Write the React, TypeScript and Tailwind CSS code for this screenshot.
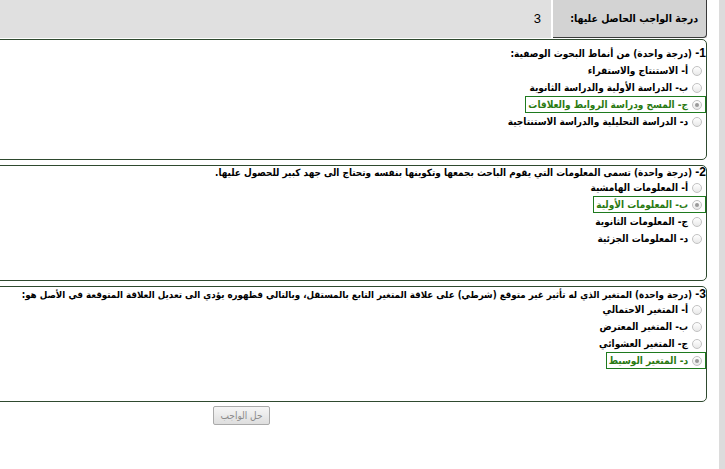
import React from "react";

type Question = {
  n: string;
  text: string;
  options: string[];
  picked: number;
  box: string;
  line: string;
};

const questions: Question[] = [
  {
    n: "1",
    text: "(درجة واحدة) من أنماط البحوث الوصفية:",
    options: [
      "أ- الاستنتاج والاستقراء",
      "ب- الدراسة الأولية والدراسة الثانوية",
      "ج- المسح ودراسة الروابط والعلاقات",
      "د- الدراسة التحليلية والدراسة الاستنتاجية",
    ],
    picked: 2,
    box: "h-[121px] pt-[5px]",
    line: "leading-[16px]",
  },
  {
    n: "2",
    text: "(درجة واحدة) تسمى المعلومات التي يقوم الباحث بجمعها وتكوينها بنفسه وتحتاج الى جهد كبير للحصول عليها.",
    options: ["أ- المعلومات الهامشية", "ب- المعلومات الأولية", "ج- المعلومات الثانوية", "د- المعلومات الجزئية"],
    picked: 1,
    box: "h-[116px] pt-0",
    line: "leading-[12px] text-[9.9px]",
  },
  {
    n: "3",
    text: "(درجة واحدة) المتغير الذي له تأثير غير متوقع (شرطي) على علاقة المتغير التابع بالمستقل، وبالتالي فظهوره يؤدي الى تعديل العلاقة المتوقعة في الأصل هو:",
    options: ["أ- المتغير الاحتمالي", "ب- المتغير المعترض", "ج- المتغير العشوائي", "د- المتغير الوسيط"],
    picked: 3,
    box: "h-[116px] pt-[1px]",
    line: "leading-[12px] text-[9.7px]",
  },
];

function Radio({ on }: { on: boolean }) {
  return (
    <span className="flex h-[10px] w-[10px] shrink-0 items-center justify-center rounded-full border border-[#c2c2c2] bg-gradient-to-b from-white to-[#e8e8e8]">
      {on && <span className="h-[4px] w-[4px] rounded-full bg-[#9a9a9a]" />}
    </span>
  );
}

function QuestionBox({ q }: { q: Question }) {
  return (
    <div className={`-ml-[6px] ${q.box} rounded-[5px] border-[1.5px] border-[#2f4a2f]`} dir="rtl">
      <div className={`whitespace-nowrap text-black ${q.line}`}>
        <span className="font-['Liberation_Sans'] text-[12px]">{q.n}- </span>
        {q.text}
      </div>
      <ul>
        {q.options.map((o, i) => (
          <li key={o} className="flex h-[17px] items-center">
            {i === q.picked ? (
              <span className="flex h-[17px] items-center gap-[4px] border-[1.5px] border-[#1e7a1e] pl-[2px] pr-[3px] text-[#2a7a12]">
                <Radio on />
                {o}
              </span>
            ) : (
              <span className="flex items-center gap-[4px] pr-[4px] text-black">
                <Radio on={false} />
                {o}
              </span>
            )}
          </li>
        ))}
      </ul>
    </div>
  );
}

export default function App() {
  return (
    <div className="flex min-h-screen bg-white font-['DejaVu_Sans_Condensed','DejaVu_Sans',sans-serif] text-[10px] font-bold">
      <div className="w-[707px] shrink-0 overflow-hidden">
        <div className="flex h-[38px] justify-start bg-[#e0e0e0] text-[10.5px]" dir="rtl">
          <div className="flex w-[154px] items-center whitespace-nowrap rounded-br-[4px] border-b border-r border-[#3a3a3a] bg-[#d3d3d3] pr-[8px]">
            درجة الواجب الحاصل عليها:
          </div>
          <div className="flex w-[100px] items-center border-r-2 border-white pr-[10px] font-['Liberation_Sans'] text-[13px] font-normal">
            3
          </div>
        </div>
        <div className="mt-px flex flex-col gap-[5px]">
          {questions.map((q) => (
            <QuestionBox key={q.n} q={q} />
          ))}
        </div>
        <button className="ml-[213px] mt-[4px] h-[19px] w-[57px] rounded-[2px] border border-[#aaa] bg-gradient-to-b from-[#f6f6f6] to-[#dedede] text-[10px] font-normal text-[#8a8a8a]">
          حل الواجب
        </button>
      </div>
      <div className="w-[12px]" />
      <div className="w-[6px] bg-[#dcdcdc]" />
    </div>
  );
}
